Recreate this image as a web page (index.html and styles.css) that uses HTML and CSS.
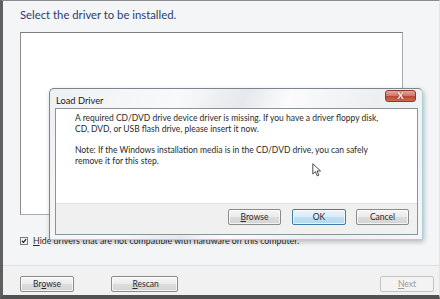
FILE: index.html
```html
<!DOCTYPE html>
<html lang="en">
<head>
  <meta charset="UTF-8" />
  <title>Install Windows – Load Driver</title>
  <link rel="stylesheet" href="styles.css">
</head>
<body>
  <div class="window">
    <div class="main">
      <h1 class="heading">Select the driver to be installed.</h1>
      <div class="listbox"></div>
      <label class="check-row">
        <span class="checkbox">
          <svg viewBox="0 0 8 8" width="8" height="8"><path d="M1.2 3.8 L3.2 5.9 L6.8 1.6" fill="none" stroke="#1a1a1a" stroke-width="1.6"/></svg>
        </span>
        <span><u>H</u>ide drivers that are not compatible with hardware on this computer.</span>
      </label>
    </div>

    <div class="footer">
      <button class="btn">Br<u>o</u>wse</button>
      <button class="btn">&nbsp;<u>R</u>escan</button>
      <span class="spacer"></span>
      <button class="btn" disabled><u>N</u>ext</button>
    </div>

    <div class="dialog">
      <div class="dialog-title">
        <span>Load Driver</span>
        <span class="close-btn">X</span>
      </div>
      <div class="dialog-body">
        <div class="dialog-text">
          <p>A required CD/DVD drive device driver is missing. If you have a driver floppy disk,<br>CD, DVD, or USB flash drive, please insert it now.</p>
          <p>Note: If the Windows installation media is in the CD/DVD drive, you can safely<br>remove it for this step.</p>
        </div>
        <div class="dialog-buttons">
          <button class="btn small"><u>B</u>rowse</button>
          <button class="btn small default">OK</button>
          <button class="btn small">Cancel</button>
        </div>
      </div>
    </div>

    <svg class="cursor" viewBox="0 0 12 19" width="9" height="14">
      <path d="M1 1 L1 15 L4.5 11.6 L7 17.5 L9.2 16.5 L6.8 10.8 L11.5 10.8 Z" fill="#fff" stroke="#222" stroke-width="1.1" stroke-linejoin="round"/>
    </svg>
  </div>
</body>
</html>
```

FILE: styles.css
```css
* {
  box-sizing: border-box;
}

html, body {
  margin: 0;
  padding: 0;
  width: 440px;
  height: 299px;
  overflow: hidden;
  font-family: 'Lato', 'Liberation Sans', sans-serif;
  background: #f4f5f6;
}

.window {
  position: relative;
  width: 440px;
  height: 299px;
  border-left: 3px solid #5d5f61;
  border-top: 1px solid #8a8c8e;
  border-bottom: 4px solid #4f5153;
  border-right: 1px solid #e2e4e6;
  background: #f4f5f6;
  display: flex;
  flex-direction: column;
}

.main {
  flex: 1;
  padding: 7px 0 0 17px;
}

.heading {
  margin: 0;
  font-weight: normal;
  font-size: 11.3px;
  line-height: 14px;
  color: #2a3d73;
}

.listbox {
  margin-top: 10px;
  width: 383px;
  height: 183px;
  background: #fff;
  border: 1px solid #a8aaac;
  border-top-color: #7c7e80;
  border-left-color: #8a8c8e;
}

.check-row {
  display: flex;
  align-items: center;
  gap: 5px;
  margin-top: 20px;
  font-size: 8.8px;
  color: #2a2a2a;
}

.checkbox {
  width: 8px;
  height: 8px;
  border: 1px solid #7a7c7e;
  background: #f2f2f2;
  display: flex;
  align-items: center;
  justify-content: center;
}

.checkbox svg {
  width: 6px;
  height: 6px;
}

.footer {
  height: 30px;
  border-top: 1px solid #dedfe0;
  background: #f1f1f1;
  display: flex;
  align-items: flex-start;
  gap: 37px;
  padding: 10px 5px 0 17px;
}

.spacer {
  flex: 1;
}

.btn {
  font-family: inherit;
  font-size: 8.5px;
  color: #2a2a2a;
  height: 16px;
  width: 54px;
  padding: 0;
  border: 1px solid #8b8b8b;
  border-radius: 2px;
  background: linear-gradient(to bottom, #f6f6f6 0%, #ebebeb 48%, #dcdcdc 52%, #d4d4d4 100%);
  box-shadow: inset 0 0 0 1px rgba(255, 255, 255, 0.7);
}

.footer .btn:nth-child(2) {
  width: 67px;
}

.btn:disabled {
  color: #9a9a9a;
  border-color: #c4c4c4;
  background: #f3f3f3;
  box-shadow: none;
}

.btn.small {
  width: 53px;
  height: 16px;
}

.btn.default {
  width: 54px;
  border-color: #3d7bad;
  background: linear-gradient(to bottom, #eaf5fb 0%, #d8edf8 48%, #bfe0f3 52%, #b2d8ee 100%);
}

/* Load Driver dialog, floating over the setup page */
.dialog {
  position: absolute;
  left: 46px;
  top: 87px;
  width: 374px;
  height: 152px;
  border: 1px solid #7b8590;
  border-right-color: #a7cfdc;
  border-bottom-color: #a7cfdc;
  border-radius: 5px 5px 2px 2px;
  background: linear-gradient(115deg, #eef1f4 0%, #f8f9fa 30%, #e5e9ed 45%, #fbfbfc 55%, #eceff2 75%, #f5f6f7 100%);
  box-shadow: 1px 2px 5px rgba(0, 0, 0, 0.25);
  padding: 0 4px 4px 5px;
  display: flex;
  flex-direction: column;
}

.dialog-title {
  position: relative;
  height: 19px;
  font-size: 9.3px;
  color: #1a1a1a;
  display: flex;
  align-items: center;
  padding: 3px 0 0 1px;
}

.close-btn {
  position: absolute;
  right: 2px;
  top: 1px;
  width: 31px;
  height: 12px;
  border: 1px solid #8a3b2e;
  border-radius: 3px;
  background: linear-gradient(to bottom, #e6a799 0%, #d27a67 45%, #bb4a35 55%, #d06a53 100%);
  color: #fff;
  font-size: 9px;
  font-weight: bold;
  text-align: center;
  line-height: 10px;
  text-shadow: 0 0 2px #7a1b0b;
}

.dialog-body {
  flex: 1;
  border: 1px solid #8c949b;
  background: #fff;
  display: flex;
  flex-direction: column;
}

.dialog-text {
  flex: 1;
  padding: 4px 0 0 19px;
  font-size: 8.5px;
  line-height: 11px;
  color: #2a2a2a;
}

.dialog-text p {
  margin: 0 0 10px;
}

.dialog-buttons {
  height: 31px;
  border-top: 1px solid #dfdfdf;
  background: #f0f0f0;
  display: flex;
  justify-content: flex-end;
  align-items: flex-start;
  gap: 10px;
  padding: 5px 8px 0 0;
}

.dialog-buttons .btn:first-child {
  margin-right: 1px;
}

.cursor {
  position: absolute;
  left: 309px;
  top: 162px;
}
```
